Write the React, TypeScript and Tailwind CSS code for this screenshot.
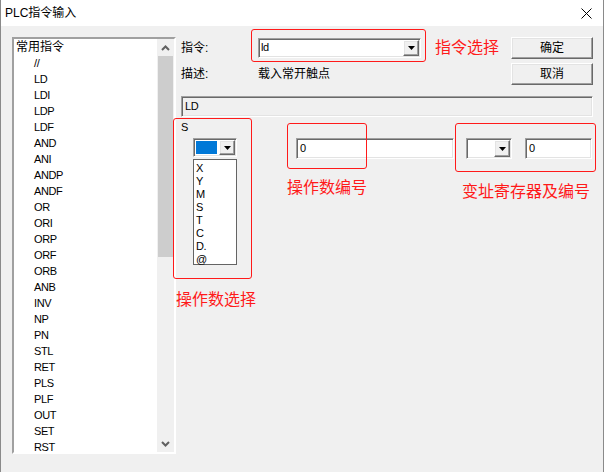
const listItems = [
  '//', 'LD', 'LDI', 'LDP', 'LDF', 'AND', 'ANI', 'ANDP', 'ANDF', 'OR', 'ORI', 'ORP',
  'ORF', 'ORB', 'ANB', 'INV', 'NP', 'PN', 'STL', 'RET', 'PLS', 'PLF', 'OUT', 'SET', 'RST',
];

const regItems = ['X', 'Y', 'M', 'S', 'T', 'C', 'D.', '@'];

const sunken =
  'border border-t-[#a0a0a0] border-l-[#a0a0a0] border-r-white border-b-white shadow-[inset_1px_1px_0_#696969,inset_-1px_-1px_0_#e3e3e3]';
const raised =
  'border border-t-white border-l-white border-r-[#696969] border-b-[#696969] shadow-[inset_-1px_-1px_0_#a0a0a0,inset_1px_1px_0_#e3e3e3]';

const latin = 'text-[11px] tracking-[-0.4px]';
const redNote = 'text-[16px] leading-[20px] text-[#ff1a1a] whitespace-nowrap';

const DropArrow = () => (
  <div className={`flex h-full w-[16px] items-center justify-center bg-[#f0f0f0] ${raised}`}>
    <svg width="7" height="4" viewBox="0 0 7 4">
      <path d="M0 0h7L3.5 4z" fill="#000" />
    </svg>
  </div>
);

const Chevron = ({ up }: { up?: boolean }) => (
  <svg width="9" height="6" viewBox="0 0 9 6">
    <path
      d={up ? 'M1 5l3.5-3.5L8 5' : 'M1 1l3.5 3.5L8 1'}
      fill="none"
      stroke="#606060"
      strokeWidth="2"
    />
  </svg>
);

export default function App() {
  return (
    <div className="relative h-[472px] w-[610px] overflow-hidden bg-white font-['Liberation_Sans','Noto_Sans_CJK_SC',sans-serif] text-[12px] text-black">
      <div className="flex h-full w-[604px] flex-col border-x border-[#8a8a8a]">
        <div className="flex h-[26px] items-center justify-between bg-white pl-[4px] pr-[11px]">
          <span className="leading-[14px]">PLC指令输入</span>
          <svg width="11" height="11" viewBox="0 0 11 11">
            <path d="M0.5 0.5l10 10M10.5 0.5l-10 10" stroke="#000" strokeWidth="1" />
          </svg>
        </div>

        <div className="flex flex-1 bg-[#f0f0f0] pl-[11px] pt-[11px]">
          <div className={`flex h-[417px] w-[164px] bg-white ${sunken} border-2 shadow-none border-t-[#808080] border-l-[#808080] border-r-[#f8f8f8] border-b-[#f8f8f8]`}>
            <div className="flex-1 pl-[2px]">
              <div className="h-[16px] leading-[16px]">常用指令</div>
              {listItems.map((item) => (
                <div key={item} className={`h-[16px] pl-[18px] leading-[16px] ${latin}`}>
                  {item}
                </div>
              ))}
            </div>
            <div className="flex w-[17px] flex-col bg-[#f0f0f0]">
              <div className="flex h-[17px] items-center justify-center">
                <Chevron up />
              </div>
              <div className="mx-[1px] h-[201px] bg-[#cdcdcd]" />
              <div className="flex-1" />
              <div className="flex h-[17px] items-center justify-center">
                <Chevron />
              </div>
            </div>
          </div>

          <div className="flex-1 pl-[5px] pr-[10px]">
            <div className="flex h-[22px] items-center">
              <span className="w-[77px]">指令:</span>
              <div className={`flex h-[20px] w-[163px] bg-white ${sunken}`}>
                <span className={`flex-1 pl-[2px] leading-[16px] ${latin}`}>ld</span>
                <div className="p-[1px]">
                  <DropArrow />
                </div>
              </div>
              <span className={`ml-[14px] ${redNote}`}>指令选择</span>
              <button className={`ml-auto h-[22px] w-[82px] bg-[#f0f0f0] ${raised}`}>确定</button>
            </div>

            <div className="mt-[4px] flex h-[22px] items-center">
              <span className="w-[77px]">描述:</span>
              <span>载入常开触点</span>
              <button className={`ml-auto h-[22px] w-[82px] bg-[#f0f0f0] ${raised}`}>取消</button>
            </div>

            <div className={`mt-[11px] flex h-[21px] items-center bg-[#f0f0f0] pl-[3px] ${sunken}`}>
              <span className={latin}>LD</span>
            </div>

            <div className="flex">
              <div className="w-[115px]">
                <div className={`mt-[4px] leading-[12px] ${latin}`}>S</div>
                <div className={`ml-[12px] mt-[5px] flex h-[19px] w-[44px] bg-white ${sunken}`}>
                  <div className="m-[2px] flex-1 bg-[#0078d7]" />
                  <div className="py-[1px] pr-[1px]">
                    <DropArrow />
                  </div>
                </div>
                <div className="ml-[12px] mt-[2px] h-[106px] w-[44px] border border-[#646464] bg-white pl-[2px] pt-[2px]">
                  {regItems.map((item) => (
                    <div key={item} className={`h-[13px] leading-[13px] ${latin}`}>
                      {item}
                    </div>
                  ))}
                </div>
                <div className={`-ml-[5px] mt-[25px] ${redNote}`}>操作数选择</div>
              </div>

              <div className="mt-[21px]">
                <div className={`flex h-[21px] w-[158px] items-center bg-white pl-[3px] ${sunken}`}>
                  <span className={latin}>0</span>
                </div>
                <div className={`-ml-[9px] mt-[19px] ${redNote}`}>操作数编号</div>
              </div>

              <div className="ml-[12px] mt-[21px]">
                <div className="flex">
                  <div className={`flex h-[21px] w-[46px] bg-white ${sunken}`}>
                    <div className="flex-1" />
                    <div className="p-[1px]">
                      <DropArrow />
                    </div>
                  </div>
                  <div className={`ml-[13px] flex h-[21px] w-[67px] items-center bg-white pl-[3px] ${sunken}`}>
                    <span className={latin}>0</span>
                  </div>
                </div>
                <div className={`-ml-[4px] mt-[23px] ${redNote}`}>变址寄存器及编号</div>
              </div>
            </div>
          </div>
        </div>
      </div>

      <div className="absolute left-[251px] top-[29px] h-[33px] w-[175px] rounded-[3px] border border-[#ff1a1a]" />
      <div className="absolute left-[173px] top-[118px] h-[161px] w-[79px] rounded-[3px] border border-[#ff1a1a]" />
      <div className="absolute left-[287px] top-[123px] h-[46px] w-[80px] rounded-[3px] border border-[#ff1a1a]" />
      <div className="absolute left-[455px] top-[123px] h-[49px] w-[141px] rounded-[3px] border border-[#ff1a1a]" />
    </div>
  );
}
